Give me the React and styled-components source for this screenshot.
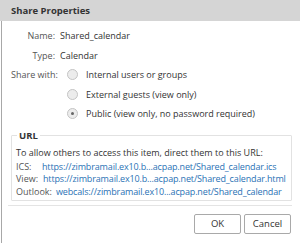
import React from "react";
import styled, { createGlobalStyle } from "styled-components";

const Global = createGlobalStyle`
  html, body { margin: 0; padding: 0; background: #fff; }
  body { font-family: "Open Sans", "Noto Sans", sans-serif; }
`;

const Dialog = styled.div`
  width: 300px;
  height: 243px;
  box-sizing: border-box;
  display: flex;
  flex-direction: column;
  background: #fff;
  overflow: hidden;
`;

const Header = styled.div`
  height: 21px;
  background: #d5d5d5;
  display: flex;
  align-items: center;
  padding-left: 11px;
  font-size: 9.5px;
  font-weight: 700;
  color: #333;
`;

const Body = styled.div`
  flex: 1;
  margin-left: 1px;
  border-left: 1px solid #a8a8a8;
  display: flex;
  flex-direction: column;
  padding: 5px 0 0 9px;
  font-size: 9px;
  color: #333;
`;

const Row = styled.div`
  display: flex;
  align-items: center;
  height: 19.5px;
`;

const Label = styled.div`
  width: ${(p) => p.$w || 44}px;
  text-align: ${(p) => (p.$left ? "left" : "right")};
  color: #555;
  flex: none;
`;

const Value = styled.div`
  margin-left: ${(p) => p.$ml ?? 5}px;
`;

const RadioCircle = styled.span`
  width: 9px;
  height: 9px;
  border-radius: 50%;
  border: 1px solid #c4c4c4;
  background: #ececec;
  display: inline-flex;
  align-items: center;
  justify-content: center;
  flex: none;
  margin-right: 8px;
  &::after {
    content: "";
    width: 3px;
    height: 3px;
    border-radius: 50%;
    background: ${(p) => (p.$checked ? "#666" : "transparent")};
  }
`;

const RadioText = styled.span`
  color: #333;
`;

const Indent = styled.div`
  display: flex;
  align-items: center;
  margin-left: ${(p) => p.$ml || 0}px;
`;

const Fieldset = styled.fieldset`
  margin: 5px 8px 0 0;
  padding: 4px 0 5px 4px;
  border: 1px solid #e2e2e2;
  border-radius: 1px;
  height: 72px;
  box-sizing: border-box;
  min-width: 0;
`;

const Legend = styled.legend`
  font-weight: 700;
  color: #333;
  padding: 0 2px;
  margin-left: 1px;
  font-size: 9.5px;
`;

const Intro = styled.div`
  line-height: 13px;
  margin-bottom: 2px;
  white-space: nowrap;
`;

const UrlLine = styled.div`
  display: flex;
  line-height: 12.7px;
  white-space: nowrap;
`;

const UrlLabel = styled.span`
  color: #555;
  margin-right: 4px;
  width: ${(p) => p.$w}px;
  flex: none;
`;

const Link = styled.span`
  color: #2a72b5;
  letter-spacing: -0.15px;
`;

const Separator = styled.div`
  height: 1px;
  background: #e4e4e4;
  margin: 4px 8px 0 -3px;
`;

const Buttons = styled.div`
  display: flex;
  justify-content: flex-end;
  gap: 3px;
  margin: 8px 9px 0 0;
`;

const Button = styled.button`
  width: 47px;
  height: 20px;
  box-sizing: border-box;
  border: 1px solid #a9a9a9;
  border-radius: 2px;
  background: #fff;
  color: #333;
  font-family: inherit;
  font-size: 9.5px;
  padding: 0;
`;

export default function App() {
  return (
    <>
      <Global />
      <Dialog>
        <Header>Share Properties</Header>
        <Body>
          <Row>
            <Label>Name:</Label>
            <Value>Shared_calendar</Value>
          </Row>
          <Row>
            <Label>Type:</Label>
            <Value>Calendar</Value>
          </Row>
          <Row>
            <Label $left $w={56}>Share with:</Label>
            <Indent>
              <RadioCircle />
              <RadioText>Internal users or groups</RadioText>
            </Indent>
          </Row>
          <Row>
            <Indent $ml={56}>
              <RadioCircle />
              <RadioText>External guests (view only)</RadioText>
            </Indent>
          </Row>
          <Row>
            <Indent $ml={56}>
              <RadioCircle $checked />
              <RadioText>Public (view only, no password required)</RadioText>
            </Indent>
          </Row>
          <Fieldset>
            <Legend>URL</Legend>
            <Intro>To allow others to access this item, direct them to this URL:</Intro>
            <UrlLine>
              <UrlLabel $w={22}>ICS:</UrlLabel>
              <Link>https://zimbramail.ex10.b...acpap.net/Shared_calendar.ics</Link>
            </UrlLine>
            <UrlLine>
              <UrlLabel $w={23}>View:</UrlLabel>
              <Link>https://zimbramail.ex10.b...acpap.net/Shared_calendar.html</Link>
            </UrlLine>
            <UrlLine>
              <UrlLabel $w={36}>Outlook:</UrlLabel>
              <Link>webcals://zimbramail.ex10...acpap.net/Shared_calendar</Link>
            </UrlLine>
          </Fieldset>
          <Separator />
          <Buttons>
            <Button>OK</Button>
            <Button>Cancel</Button>
          </Buttons>
        </Body>
      </Dialog>
    </>
  );
}
